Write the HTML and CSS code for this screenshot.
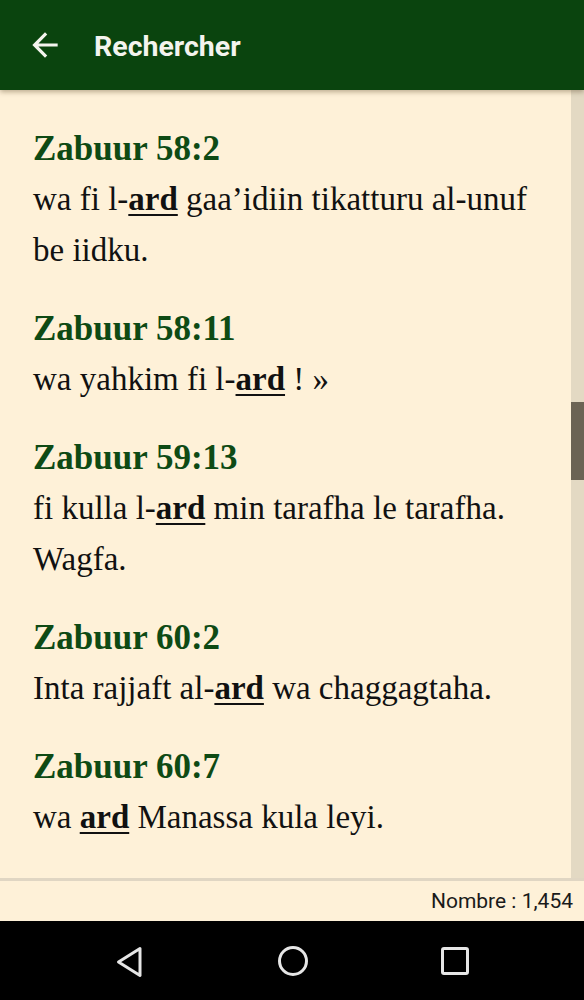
FILE: index.html
```html
<!DOCTYPE html>
<html lang="fr">
<head>
<meta charset="utf-8">
<title>Rechercher</title>
<link rel="stylesheet" href="styles.css">
</head>
<body>
<div class="screen">
  <header class="appbar">
    <svg class="back" viewBox="0 0 24 24" width="38" height="38" aria-hidden="true">
      <path d="M20 11H7.83l5.59-5.59L12 4l-8 8 8 8 1.41-1.41L7.83 13H20v-2z" fill="#f4f4ee"/>
    </svg>
    <h1 class="title">Rechercher</h1>
  </header>
  <main class="results">
    <div class="list">
      <section class="item">
        <h2 class="ref">Zabuur 58:2</h2>
        <p class="verse">wa fi l-<b class="hit">ard</b> gaa’idiin tikatturu al-unuf be iidku.</p>
      </section>
      <section class="item">
        <h2 class="ref">Zabuur 58:11</h2>
        <p class="verse">wa yahkim fi l-<b class="hit">ard</b> ! »</p>
      </section>
      <section class="item">
        <h2 class="ref">Zabuur 59:13</h2>
        <p class="verse">fi kulla l-<b class="hit">ard</b> min tarafha le tarafha. Wagfa.</p>
      </section>
      <section class="item">
        <h2 class="ref">Zabuur 60:2</h2>
        <p class="verse">Inta rajjaft al-<b class="hit">ard</b> wa chaggagtaha.</p>
      </section>
      <section class="item">
        <h2 class="ref">Zabuur 60:7</h2>
        <p class="verse">wa <b class="hit">ard</b> Manassa kula leyi.</p>
      </section>
    </div>
    <div class="scrolltrack"><div class="scrollthumb"></div></div>
  </main>
  <footer class="countbar">Nombre : 1,454</footer>
  <nav class="navbar">
    <svg class="nav-icon tri" viewBox="0 0 30 32" width="30" height="32" aria-hidden="true">
      <path d="M25 2.5 L3.5 16 L25 29.5 Z" fill="none" stroke="#e6e6e6" stroke-width="3" stroke-linejoin="round"/>
    </svg>
    <svg class="nav-icon circ" viewBox="0 0 32 32" width="32" height="32" aria-hidden="true">
      <circle cx="16" cy="16" r="13.5" fill="none" stroke="#e6e6e6" stroke-width="3"/>
    </svg>
    <svg class="nav-icon sq" viewBox="0 0 30 30" width="30" height="30" aria-hidden="true">
      <rect x="2.5" y="2.5" width="25" height="25" rx="1.5" fill="none" stroke="#e6e6e6" stroke-width="3"/>
    </svg>
  </nav>
</div>
</body>
</html>
```
FILE: styles.css
```css
html, body {
  margin: 0;
  padding: 0;
}
body {
  background: #fef1d8;
}
.screen {
  width: 584px;
  height: 1000px;
  display: flex;
  flex-direction: column;
  overflow: hidden;
  background: #fef1d8;
}
.appbar {
  flex: 0 0 90px;
  height: 90px;
  background: #0a440e;
  display: flex;
  align-items: center;
  box-shadow: 0 2px 5px rgba(60, 40, 10, 0.35);
  position: relative;
  z-index: 2;
}
.back {
  margin-left: 26px;
  margin-right: 30px;
  flex: 0 0 auto;
}
.title {
  margin: 2px 0 0 0;
  font-family: Roboto, "Noto Sans", sans-serif;
  font-weight: 700;
  font-size: 28.5px;
  color: #f4f4ee;
}
.results {
  flex: 1 1 auto;
  position: relative;
  overflow: hidden;
}
.list {
  padding: 33px 40px 0 33px;
}
.item {
  margin-bottom: 27px;
}
.ref {
  margin: 0;
  font-family: "Liberation Serif", "Times New Roman", serif;
  font-weight: 700;
  font-size: 35px;
  line-height: 51px;
  color: #0e4a14;
}
.verse {
  margin: 0;
  font-family: "Liberation Serif", "Times New Roman", serif;
  font-size: 33px;
  line-height: 51px;
  color: #111;
}
.hit {
  font-weight: 700;
  text-decoration: underline;
  text-decoration-thickness: 2px;
  text-underline-offset: 4px;
}
.scrolltrack {
  position: absolute;
  top: 0;
  right: 0;
  bottom: 0;
  width: 13px;
  background: #e3d9c3;
}
.scrollthumb {
  position: absolute;
  top: 312px;
  left: 0;
  width: 13px;
  height: 78px;
  background: #6b6354;
}
.countbar {
  flex: 0 0 40px;
  height: 40px;
  border-top: 3px solid #e0d6c3;
  display: flex;
  align-items: center;
  justify-content: flex-end;
  padding-right: 11px;
  font-family: Roboto, "Noto Sans", sans-serif;
  font-size: 21px;
  color: #1a1a1a;
}
.navbar {
  flex: 0 0 79px;
  height: 79px;
  background: #000;
  display: flex;
  align-items: center;
  justify-content: flex-start;
  padding-left: 115px;
}
.nav-icon {
  display: block;
  flex: 0 0 auto;
}
.tri { margin-right: 132px; margin-top: 2px; }
.circ { margin-right: 131px; }
```
